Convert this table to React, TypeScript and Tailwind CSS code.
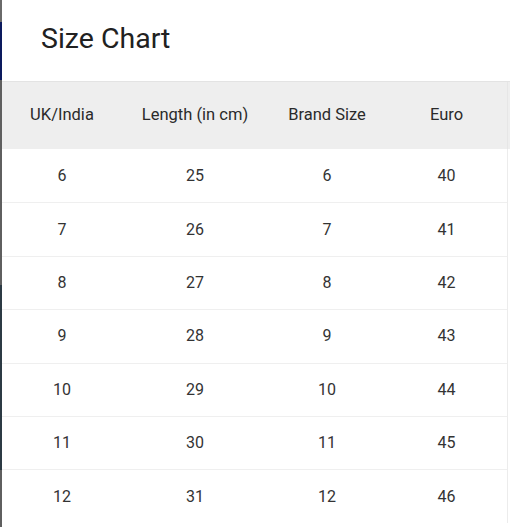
import React from "react";

const rows = [
  [6, 25, 6, 40],
  [7, 26, 7, 41],
  [8, 27, 8, 42],
  [9, 28, 9, 43],
  [10, 29, 10, 44],
  [11, 30, 11, 45],
  [12, 31, 12, 46],
];

const widths = ["w-[120px]", "w-[146px]", "w-[118px]", "w-[121px]"];

export default function App() {
  return (
    <div className="flex w-[510px] h-[527px] overflow-hidden bg-white" style={{ fontFamily: "Roboto, 'Liberation Sans', sans-serif" }}>
      <div className="flex flex-col w-[2px] shrink-0">
        <div className="h-[22px] bg-[#6a6a6a]" />
        <div className="h-[58px] bg-[#0c1a5e]" />
        <div className="h-[205px] bg-[#5f5f5f]" />
        <div className="h-[185px] bg-[#2c3a44]" />
        <div className="flex-1 bg-[#5f5f5f]" />
      </div>
      <div className="flex-1 flex flex-col">
        <div className="h-[82px] shrink-0 border-b border-[#e3e3e3] flex items-center pl-[39px]">
          <h1 className="text-[28.5px] text-[#212121] leading-none -mt-[3px]">Size Chart</h1>
        </div>
        <div className="flex h-[67px] shrink-0 bg-[#eeeeee] text-[16.5px] text-[#2a2a2a]">
          {["UK/India", "Length (in cm)", "Brand Size", "Euro"].map((h, i) => (
            <div key={h} className={`${widths[i]} flex items-center justify-center`}>{h}</div>
          ))}
          <div className="flex-1 border-l border-[#e6e6e6]" />
        </div>
        <div className="flex flex-col w-[506px] border-r border-[#ececec] text-[16px] text-[#333]">
          {rows.map((r, ri) => (
            <div key={ri} className={`flex h-[53.4px] shrink-0 ${ri > 0 ? "border-t border-[#efefef]" : ""}`}>
              {r.map((c, ci) => (
                <div key={ci} className={`${widths[ci]} flex items-center justify-center`}>{c}</div>
              ))}
            </div>
          ))}
        </div>
      </div>
    </div>
  );
}
